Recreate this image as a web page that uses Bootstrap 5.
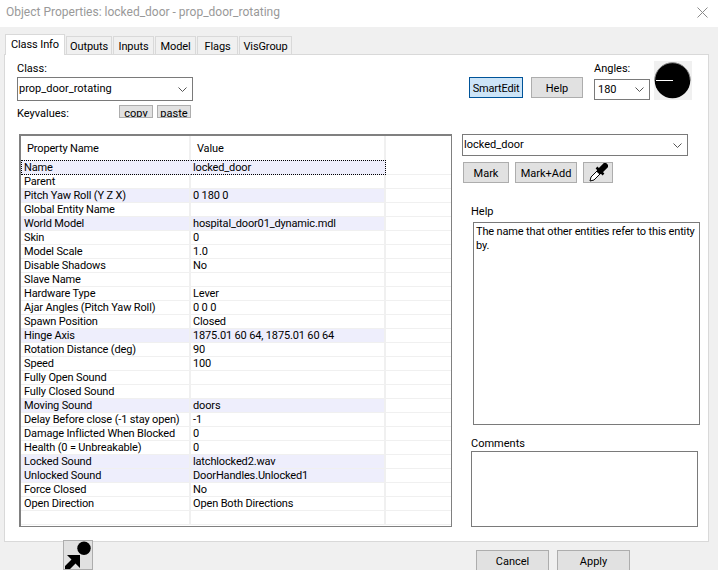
<!DOCTYPE html>
<html lang="en">
<head>
<meta charset="utf-8">
<title>Object Properties</title>
<link href="https://cdn.jsdelivr.net/npm/bootstrap@5.3.0/dist/css/bootstrap.min.css" rel="stylesheet">
<style>
html,body{height:570px;overflow:hidden}
body{background:#f0f0f0;color:#000;font:11px/14px Roboto,"Liberation Sans",Arial,sans-serif;width:718px}
.wintitle{height:27px;background:#fff;padding:0 10px 3px 6px;color:#999;font-size:12px}
.tabstrip{height:27px;padding-left:5px;border:0;flex-wrap:nowrap}
.tabstrip .nav-link{height:18px;margin:0 1px 0 0;padding:3px 0 0;text-align:center;background:#f0f0f0;border:1px solid #d9d9d9;border-bottom:0;border-radius:0;color:#000;font-size:11px;line-height:14px;letter-spacing:-.1px}
.tabstrip .nav-link.active{height:21px;background:#fff;color:#000;border-color:#d9d9d9;margin-bottom:-1px;position:relative;z-index:1}
.sheet{margin-left:4px;width:705px;height:488px;background:#fff;border:1px solid #d9d9d9;padding:6px 0 0 12px}
.toprow{height:73px}
.classbox{width:176px}
.fieldlabel{height:16px;padding-top:1px}
.winselect{height:24px;border:1px solid #7a7a7a;border-radius:0;padding:0 20px 0 1px;font-size:11px;line-height:20px;color:#000;background-size:9px;background-position:right 5px center;background-image:url("data:image/svg+xml,%3csvg xmlns='http://www.w3.org/2000/svg' viewBox='0 0 9 5'%3e%3cpath fill='none' stroke='%23555' d='M.5.500l4 4 4-4'/%3e%3c/svg%3e");box-shadow:none}
.winbtn{background:#e1e1e1;border:1px solid #adadad;border-radius:0;color:#000;font-size:11px;line-height:14px;padding:1px 0 0;--bs-btn-hover-bg:#e1e1e1}
.btn-small{width:34px;height:13px;overflow:hidden}
.kvrow{margin-top:4px;height:14px}
.kvlabel{width:102px;padding-top:2px}
.smartrow{margin-left:276px;margin-top:16px;height:21px}
.btn-smart{width:54px;height:21px;background:#cce4f7;border-color:#005499;letter-spacing:-.2px;padding-top:2px}
.btn-help{width:52px;height:21px;margin-left:8px;padding-top:2px}
.anglebox{width:56px;margin-left:11px;margin-top:-16px}
.anglebox .winselect{height:21px;margin-top:2px;padding-left:3px}
.dial{width:38px;height:39px;margin-left:4px;margin-top:-16px;background:#f0f0f0}
.mainrow{height:393px}
.gridbox{width:433px;height:393px;margin-left:2px;border:1px solid #808080;border-width:2px 1px 1px 2px;overflow:hidden;background:#fff}
.proptable{table-layout:fixed;width:431px;margin:0;border-collapse:separate;border-spacing:0;--bs-table-bg:transparent;font-size:11px;letter-spacing:-.15px}
.proptable th,.proptable td{padding:0;height:14px;line-height:13px;border:0;border-bottom:1px solid #f0f0f0;white-space:nowrap;overflow:hidden;box-shadow:none;color:#000}
.proptable thead th{height:24px;font-weight:400;border-bottom:0;padding:1px 0 0 6px;line-height:23px;border-right:2px solid #f0f0f0}
.proptable thead th:last-child{border-right:0}
.proptable td.cname{padding-left:3px;border-right:2px solid #f0f0f0}
.proptable td.cval{padding-left:2px;border-right:2px solid #f0f0f0}
.proptable tr.tint td.cname,.proptable tr.tint td.cval{background:#eeeefc}
.proptable tr.focused td.cname,.proptable tr.focused td.cval{border-top:1px dotted #000;border-bottom:1px dotted #000;background:#eeeefc}
.proptable tr.focused td.cname{border-left:1px dotted #000;border-right-color:transparent;padding-left:2px}
.proptable tr.focused td.cval{border-right:1px dotted #000}
.sidecol{width:240px;margin-left:10px}
.sidecol .winselect{width:226px;height:22px}
.markrow{margin:6px 0 0 1px;gap:6px}
.markrow .winbtn{height:21px;padding-top:2px}
.btn-mark{width:46px}
.btn-markadd{width:62px}
.markrow .btn-drop{width:30px;padding:0}
.lbl-help{margin:22px 0 0 9px;height:14px}
.winarea{border:1px solid #7a7a7a;border-radius:0;background:#fff;padding:2px 0 2px 2px;font-size:11px;line-height:14px;letter-spacing:-.15px;color:#000;resize:none;box-shadow:none;overflow:hidden}
.area-help{width:227px;height:203px;margin:3px 0 0 11px}
.lbl-comments{margin:12px 0 0 9px;height:14px}
.area-comments{width:227px;height:76px;margin:0 0 0 9px}
.footrow{height:28px}
.btn-view{width:30px;height:30px;margin:-2px 0 0 63px;padding:0;position:relative;z-index:2}
.btn-cancel,.btn-apply{width:73px;height:22px;margin-top:8px}
.btn-cancel{margin-left:383px}
.btn-apply{margin-left:8px}
</style>
</head>
<body>
<div class="wintitle d-flex align-items-center justify-content-between">
  <span>Object Properties: locked_door - prop_door_rotating</span>
  <svg width="11" height="11" viewBox="0 0 11 11"><path d="M.5.5l10 10M10.5.5l-10 10" stroke="#8a8a8a" fill="none"/></svg>
</div>
<ul class="nav nav-tabs tabstrip align-items-end">
  <li class="nav-item"><a class="nav-link active" style="width:60px" href="#">Class Info</a></li>
  <li class="nav-item"><a class="nav-link" style="width:46px" href="#">Outputs</a></li>
  <li class="nav-item"><a class="nav-link" style="width:41px" href="#">Inputs</a></li>
  <li class="nav-item"><a class="nav-link" style="width:41px" href="#">Model</a></li>
  <li class="nav-item"><a class="nav-link" style="width:41px" href="#">Flags</a></li>
  <li class="nav-item"><a class="nav-link" style="width:53px" href="#">VisGroup</a></li>
</ul>
<div class="sheet">
  <div class="toprow d-flex">
    <div class="classbox">
      <div class="fieldlabel">Class:</div>
      <select class="form-select winselect mt-0"><option>prop_door_rotating</option></select>
      <div class="kvrow d-flex">
        <span class="kvlabel">Keyvalues:</span>
        <button class="btn winbtn btn-small" type="button">copy</button>
        <button class="btn winbtn btn-small ms-1" type="button">paste</button>
      </div>
    </div>
    <div class="smartrow d-flex">
      <button class="btn winbtn btn-smart" type="button">SmartEdit</button>
      <button class="btn winbtn btn-help" type="button">Help</button>
      <div class="anglebox">
        <div class="fieldlabel">Angles:</div>
        <select class="form-select winselect"><option>180</option></select>
      </div>
      <svg class="dial" viewBox="0 0 38 39"><circle cx="18.5" cy="19.500" r="17.800" fill="#000"/><path d="M.7 19.500A17.800 17.800 0 0 1 36.300 19.500" fill="none" stroke="#888"/><path d="M2 19.500h17" stroke="#fff"/></svg>
    </div>
  </div>
  <div class="mainrow d-flex">
    <div class="gridbox">
      <table class="table proptable">
        <colgroup><col style="width:170px"><col style="width:195px"><col></colgroup>
        <thead><tr><th>Property Name</th><th>Value</th><th></th></tr></thead>
        <tbody>
          <tr class="focused"><td class="cname">Name</td><td class="cval">locked_door</td><td></td></tr>
          <tr><td class="cname">Parent</td><td class="cval"></td><td></td></tr>
          <tr class="tint"><td class="cname">Pitch Yaw Roll (Y Z X)</td><td class="cval">0 180 0</td><td></td></tr>
          <tr><td class="cname">Global Entity Name</td><td class="cval"></td><td></td></tr>
          <tr class="tint"><td class="cname">World Model</td><td class="cval">hospital_door01_dynamic.mdl</td><td></td></tr>
          <tr><td class="cname">Skin</td><td class="cval">0</td><td></td></tr>
          <tr><td class="cname">Model Scale</td><td class="cval">1.0</td><td></td></tr>
          <tr><td class="cname">Disable Shadows</td><td class="cval">No</td><td></td></tr>
          <tr><td class="cname">Slave Name</td><td class="cval"></td><td></td></tr>
          <tr><td class="cname">Hardware Type</td><td class="cval">Lever</td><td></td></tr>
          <tr><td class="cname">Ajar Angles (Pitch Yaw Roll)</td><td class="cval">0 0 0</td><td></td></tr>
          <tr><td class="cname">Spawn Position</td><td class="cval">Closed</td><td></td></tr>
          <tr class="tint"><td class="cname">Hinge Axis</td><td class="cval">1875.01 60 64, 1875.01 60 64</td><td></td></tr>
          <tr><td class="cname">Rotation Distance (deg)</td><td class="cval">90</td><td></td></tr>
          <tr><td class="cname">Speed</td><td class="cval">100</td><td></td></tr>
          <tr><td class="cname">Fully Open Sound</td><td class="cval"></td><td></td></tr>
          <tr><td class="cname">Fully Closed Sound</td><td class="cval"></td><td></td></tr>
          <tr class="tint"><td class="cname">Moving Sound</td><td class="cval">doors</td><td></td></tr>
          <tr><td class="cname">Delay Before close (-1 stay open)</td><td class="cval">-1</td><td></td></tr>
          <tr><td class="cname">Damage Inflicted When Blocked</td><td class="cval">0</td><td></td></tr>
          <tr><td class="cname">Health (0 = Unbreakable)</td><td class="cval">0</td><td></td></tr>
          <tr class="tint"><td class="cname">Locked Sound</td><td class="cval">latchlocked2.wav</td><td></td></tr>
          <tr class="tint"><td class="cname">Unlocked Sound</td><td class="cval">DoorHandles.Unlocked1</td><td></td></tr>
          <tr><td class="cname">Force Closed</td><td class="cval">No</td><td></td></tr>
          <tr><td class="cname">Open Direction</td><td class="cval">Open Both Directions</td><td></td></tr>
          <tr><td class="cname"></td><td class="cval"></td><td></td></tr>
        </tbody>
      </table>
    </div>
    <div class="sidecol">
      <select class="form-select winselect"><option>locked_door</option></select>
      <div class="markrow d-flex">
        <button class="btn winbtn btn-mark" type="button">Mark</button>
        <button class="btn winbtn btn-markadd" type="button">Mark+Add</button>
        <button class="btn winbtn btn-drop d-flex align-items-center justify-content-center" type="button" aria-label="Pick">
          <svg width="20" height="19" viewBox="0 0 20 19"><path d="M2 18l1-4 7-7 3 3-7 7z" fill="#fff" stroke="#000"/><path d="M8.500 4.500l7 7" stroke="#000" stroke-width="2.500" fill="none"/><path d="M12 8l5-5" stroke="#000" stroke-width="6" stroke-linecap="round" fill="none"/></svg>
        </button>
      </div>
      <div class="lbl-help">Help</div>
      <textarea class="form-control winarea area-help" rows="3">The name that other entities refer to this entity by.</textarea>
      <div class="lbl-comments">Comments</div>
      <textarea class="form-control winarea area-comments" rows="3"></textarea>
    </div>
  </div>
</div>
<div class="footrow d-flex align-items-start">
  <button class="btn winbtn btn-view d-flex align-items-center justify-content-center" type="button" aria-label="View">
    <svg width="28" height="28" viewBox="0 0 28 28"><circle cx="20" cy="7.300" r="6.700" fill="#000"/><path d="M3 14H16V27L11.500 22.500 6 28H1V25L7.500 18.500Z" fill="#000"/></svg>
  </button>
  <button class="btn winbtn btn-cancel" type="button">Cancel</button>
  <button class="btn winbtn btn-apply" type="button">Apply</button>
</div>
</body>
</html>
